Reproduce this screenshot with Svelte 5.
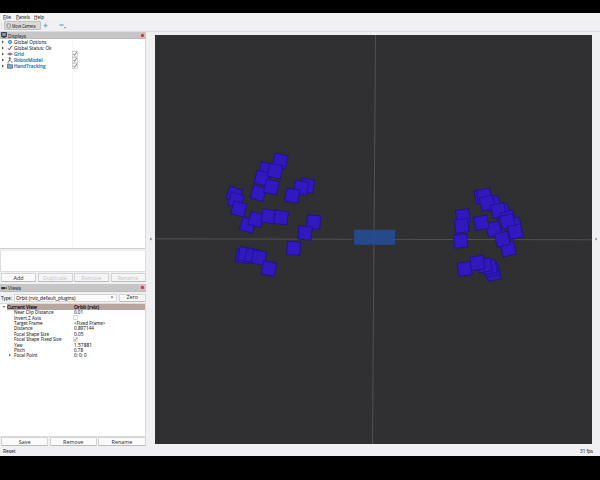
<script>
  const displays = [
    { name: 'Global Options', icon: 'gear', w: 32.5 },
    { name: 'Global Status: Ok', icon: 'ok', w: 37.5 },
    { name: 'Grid', icon: 'grid', on: true, w: 10 },
    { name: 'RobotModel', icon: 'robot', on: true, w: 28.5 },
    { name: 'HandTracking', icon: 'folder', on: true, w: 31.5 }
  ];
  // name, value, drawn widths of both
  const props = [
    ['Near Clip Distance', '0.01', 39.5, 9],
    ['Invert Z Axis', false, 27, 0],
    ['Target Frame', '<Fixed Frame>', 28.5, 31.5],
    ['Distance', '0.897144', 18.5, 20],
    ['Focal Shape Size', '0.05', 35, 9.5],
    ['Focal Shape Fixed Size', true, 47.5, 0],
    ['Yaw', '1.57881', 8.5, 18],
    ['Pitch', '0.78', 11, 9],
    ['Focal Point', '0; 0; 0', 23.5, 12.5]
  ];
  // x, y, rotation of each tracked joint marker
  const joints = [
    [280.2, 161, 13], [266.5, 169.7, 12], [262, 178.3, 14], [275, 171, 12], [258.3, 193.3, 16], [271.5, 187, 12],
    [307, 185.7, 9], [301, 187.7, 9], [292.2, 195.7, 9],
    [234.3, 194.5, 17], [236, 200.3, 17], [238.9, 209, 15],
    [247.8, 225, 17], [256, 219.4, 14], [268.5, 216.3, 10], [281, 217.5, 7],
    [313.5, 222, 4], [305, 233, 6], [293.6, 248.3, 4],
    [243, 256, 9], [245.6, 254.3, 9], [252.3, 255.6, 9], [259, 257.7, 10], [269, 268.6, 11],
    [481.8, 196.5, -10], [484.2, 195.8, -10], [493, 203.3, -15], [487.3, 203, -13], [502.3, 211.2, -15], [498.5, 210.5, -12], [508, 218, -13],
    [514, 225, -13], [507.5, 221.5, -13], [493.5, 229, -15], [515.4, 231.8, -13], [481.3, 222.8, -10],
    [508.3, 249, -13], [502.4, 239.2, -13], [463, 216.3, -9], [461.7, 225.8, -7], [460.6, 241, -5],
    [493.5, 273.5, -10], [491.5, 269.5, -12], [489.5, 267, -12], [484.5, 265.3, -10], [464.8, 269, -7], [477.3, 263, -7]
  ];
</script>

{#snippet check(on)}
  <svg class="check" viewBox="0 0 6 6">
    <rect x=".5" y=".5" width="5" height="5" fill="#fff" stroke="#c2c2c4" stroke-width=".7" />
    {#if on}<path d="M1.4 2.8 2.6 4.3 4.7 1.2" fill="none" stroke="#4d545c" stroke-width=".8" />{/if}
  </svg>
{/snippet}

{#snippet label(text, w)}
  <svg class="label" width={w} height="8"><text x="0" y="6" textLength={w} lengthAdjust="spacingAndGlyphs">{text}</text></svg>
{/snippet}

<div class="screen">
  <div class="window">
    <nav class="menu">
      <span class="m1">{@render label('File', 8)}</span><span class="m2">{@render label('Panels', 14)}</span><span class="m3">{@render label('Help', 10)}</span>
    </nav>
    <div class="toolbar">
      <span class="grip"></span>
      <div class="tool">
        <svg width="5" height="6" viewBox="0 0 5 6"><path d="M1 1v3l1.5 1.3L4.3 4V1.5L3 .7Z" fill="none" stroke="#777" stroke-width=".7" /></svg>
        {@render label('Move Camera', 23.5)}
      </div>
      <svg class="plus" width="5" height="5" viewBox="0 0 5 5"><circle cx="2.5" cy="2.5" r="1.3" fill="#7ea8d2" /><path d="M2.5 .5V4.5M.5 2.5H4.5" stroke="#86aed6" stroke-width="1.2" /></svg>
      <svg class="minus" width="8" height="7" viewBox="0 0 8 7"><path d="M.5 3H4.7" stroke="#86aed6" stroke-width="1.4" /><path d="M5 5.200h2L6 6.400Z" fill="#555" /></svg>
    </div>

    <main>
      <aside>
        <header>
          <svg class="hicon" width="6" height="6" viewBox="0 0 6 6"><rect x=".6" y=".6" width="4.8" height="3.8" fill="#819db3" stroke="#303a42" /><path d="M1.5 5.5h3" stroke="#444" /></svg>
          {@render label('Displays', 18)}
          <i class="close"></i>
        </header>
        <section class="tree">
          {#each displays as d}
            <div class="row">
              <svg class="arrow" viewBox="0 0 4 4"><path d="M1 .5 3 2 1 3.5Z" fill="#555" /></svg>
              <svg class="icon" viewBox="0 0 6 6">
                {#if d.icon === 'gear'}<circle cx="3" cy="3" r="1.7" fill="#89afd8" stroke="#5f92c8" stroke-width="1" />
                {:else if d.icon === 'ok'}<path d="M1.2 3.4 2.3 4.8 4.6 1" fill="none" stroke="#333" stroke-width=".9" />
                {:else if d.icon === 'grid'}<path d="M.5 3 3 1.700 5.500 3 3 4.300ZM1.700 2.300 4.300 3.700M4.300 2.300 1.700 3.700" fill="#999" stroke="#666" stroke-width=".5" />
                {:else if d.icon === 'robot'}<path d="M2.200 .8h1.200v1H2.200ZM2.800 2v1.500L1.200 4.600M2.800 3.500 4.600 4.600M.4 5.100h1.500M4 5.100h1.500" fill="#555" stroke="#555" stroke-width=".7" />
                {:else}<path d="M.5 1h2l.6.7h2.400V5.300h-5Z" fill="#7fa6cc" stroke="#3e6792" stroke-width=".7" />{/if}
              </svg>
              <span class="name" class:link={d.on}>{@render label(d.name, d.w)}</span>
              {#if d.on}{@render check(true)}{/if}
            </div>
          {/each}
        </section>
        <section class="desc"></section>
        <div class="buttons">
          <button>Add</button><button disabled>Duplicate</button><button disabled>Remove</button><button disabled>Rename</button>
        </div>

        <header class="views">
          <svg class="hicon" width="6" height="6" viewBox="0 0 6 6"><path d="M.3 2h3.8v2.300H.3ZM4 3.100 5.800 2v2.300Z" fill="#333" /></svg>
          {@render label('Views', 13)}
          <i class="close"></i>
        </header>
        <div class="type">
          {@render label('Type:', 11)}
          <div class="select">{@render label('Orbit (rviz_default_plugins)', 59.5)}<svg width="4" height="3" viewBox="0 0 4 3"><path d="M.5 .5h3L2 2.500Z" fill="#777" /></svg></div>
          <button>Zero</button>
        </div>
        <section class="props">
          <div class="current"><svg class="arrow" viewBox="0 0 4 4"><path d="M.5 1h3L2 3Z" fill="#777" /></svg>
            <div class="bar"><span>{@render label('Current View', 30)}</span>{@render label('Orbit (rviz)', 25)}</div>
          </div>
          {#each props as [name, value, w, vw], i}
            <div class="prop">
              <span class="exp">{#if i === 8}<svg class="arrow" viewBox="0 0 4 4"><path d="M1 .5 3 2 1 3.500Z" fill="#777" /></svg>{/if}</span>
              <span class="pname">{@render label(name, w)}</span>
              {#if typeof value === 'boolean'}{@render check(value)}{:else}{@render label(value, vw)}{/if}
            </div>
          {/each}
        </section>
        <div class="buttons three"><button>Save</button><button>Remove</button><button>Rename</button></div>
      </aside>

      <div class="handle left"><svg width="3" height="4" viewBox="0 0 3 4"><path d="M2.500 .5v3L.7 2Z" fill="#777" /></svg></div>
      <svg class="scene" viewBox="155 35 437 409">
        <rect x="155" y="35" width="437" height="409" fill="#302f31" />
        <path d="M155 238.800 592 239.800M375.500 35 372.500 444" stroke="#59595b" stroke-width=".8" />
        <path d="M354 229.700H395.500V244.800H354Z" fill="#25498a" />
        <path d="M353.500 232.500V243.500M395.800 232V243.500" stroke="#1d315c" stroke-width="1.300" stroke-dasharray="3 1" />
        <path d="M374 230V244.700" stroke="#31548f" stroke-width=".5" />
        {#each joints as [x, y, r]}
          <rect x="-6.700" y="-6.700" width="13.400" height="13.400" transform="translate({x} {y}) rotate({r})" fill="#3119bf" stroke="#1e1088" stroke-width=".8" />
        {/each}
      </svg>
      <div class="handle right"><svg width="3" height="4" viewBox="0 0 3 4"><path d="M.5 .5v3L2.300 2Z" fill="#777" /></svg></div>
    </main>
    <footer><span>{@render label('Reset', 12.5)}</span>{@render label('31 fps', 13)}</footer>
  </div>
</div>

<style>
  :global(body) { margin: 0; background: #000; }
  * { box-sizing: border-box; }
  .screen { width: 600px; height: 480px; background: #000; padding: 13px 0 24px; overflow: hidden; }
  .window { height: 443px; background: #f0eff1; display: flex; flex-direction: column; color: #303030; font: 5.4px/7px "Open Sans", "Noto Sans", sans-serif; }
  svg { display: block; flex: none; }
  .label { overflow: visible; }
  .label text { font: 5.5px "Open Sans", "Noto Sans", sans-serif; fill: currentColor; stroke: currentColor; stroke-width: .08px; }
  .menu { height: 7px; flex: none; display: flex; padding-left: 3px; background: #f5f4f5; }
  .menu span { height: 6.5px; }
  .m1 { width: 12.5px; background: linear-gradient(#777, #777) 0 100% / 3px .6px no-repeat; }
  .m2 { width: 18.5px; background: linear-gradient(#777, #777) 0 100% / 3px .6px no-repeat; }
  .m3 { background: linear-gradient(#777, #777) 0 100% / 3px .6px no-repeat; }
  .toolbar { height: 12px; flex: none; display: flex; align-items: center; border-bottom: 1px solid #dcdbdd; }
  .grip { width: 1px; height: 6px; margin: 0 2px 0 1px; background: #dedede; }
  .tool { width: 37px; height: 9px; display: flex; align-items: center; gap: 1px; padding-left: 1px; background: #dad9da; border: 1px solid #c3c2c3; border-radius: 1px; }
  .plus { margin-left: 2px; }
  .minus { margin-left: 10.5px; }
  main { height: 414px; flex: none; display: flex; }
  aside { width: 145.5px; display: flex; flex-direction: column; }
  header { height: 7px; flex: none; display: flex; align-items: center; gap: 1px; padding: 0 1px; background: #c7c6c7; border-bottom: 1px solid #bbbabb; }
  header .label { height: 7px; }
  .close { width: 5px; height: 5px; margin-left: auto; border-radius: 1px; background: radial-gradient(circle, #c73a46 0 1px, #dc7680 1.8px); border: 1px solid #e2b4b8; }
  .tree { height: 210px; flex: none; padding-top: .3px; background: linear-gradient(90deg, transparent 72px, #f7f7f7 72px 73px, transparent 73px) #fff; border-right: 1px solid #dcdbdc; border-bottom: 1px solid #cfcecf; }
  .row { height: 6px; display: flex; align-items: center; padding-left: 1px; }
  .arrow { width: 4px; height: 4px; }
  .icon { width: 6px; height: 6px; margin: 0 1px 0 2px; }
  .name { width: 58px; }
  .link { color: #3a86c8; }
  .link :global(text) { stroke-width: .22px; font-weight: 600; }
  .check { width: 6px; height: 6px; }
  .desc { height: 22px; flex: none; margin-top: 1px; background: #fff; border: 1px solid #dddcdd; border-top-color: #eee; }
  .buttons { height: 9px; flex: none; display: flex; gap: 1.5px; margin-top: 1px; padding: 0 0 0 1px; }
  button { flex: 1; min-width: 0; height: 9px; padding: 0; border: 1px solid #d5d4d6; border-bottom-color: #bbbabc; border-radius: 1px; background: #fbfafb; color: #292929; font: 5.4px/6px "Open Sans", "Noto Sans", sans-serif; text-align: center; }
  button:disabled { color: #c3c2c4; background: #f6f5f6; }
  .views { height: 8px; margin-top: 2px; }
  .type { height: 11px; flex: none; display: flex; align-items: center; gap: 2px; padding-left: 1px; }
  .type .label { height: 7px; }
  .select { width: 103px; height: 8px; display: flex; align-items: center; justify-content: space-between; padding: 0 2px 0 1px; background: #fbfafb; border: 1px solid #d8d7d8; }
  .type button { height: 8px; line-height: 5px; }
  .props { height: 134px; flex: none; background: #fff; border: solid #dcdbdc; border-width: 1px 1px 1px 0; }
  .current { height: 5.5px; display: flex; align-items: center; padding-left: 2px; }
  .bar { flex: 1; height: 5.5px; margin-left: 1px; display: flex; align-items: center; background: #b9a69f; color: #25201f; }
  .bar span { width: 66.5px; }
  .bar :global(text) { stroke-width: .2px; font-weight: 600; }
  .props :global(text) { font-size: 5.1px; }
  .prop { height: 5.4px; display: flex; align-items: center; }
  .exp { width: 14px; padding-left: 8px; }
  .pname { width: 59.5px; }
  .prop .check { width: 5px; height: 5px; margin-left: -.5px; }
  .three { margin-top: 0; }
  .handle { display: flex; align-items: center; justify-content: center; }
  .left { width: 9.5px; }
  .right { flex: 1; }
  .scene { width: 437px; height: 409px; margin-top: 3px; }
  footer { flex: 1; display: flex; align-items: center; justify-content: space-between; padding: 0 7.5px 0 3px; }
</style>
